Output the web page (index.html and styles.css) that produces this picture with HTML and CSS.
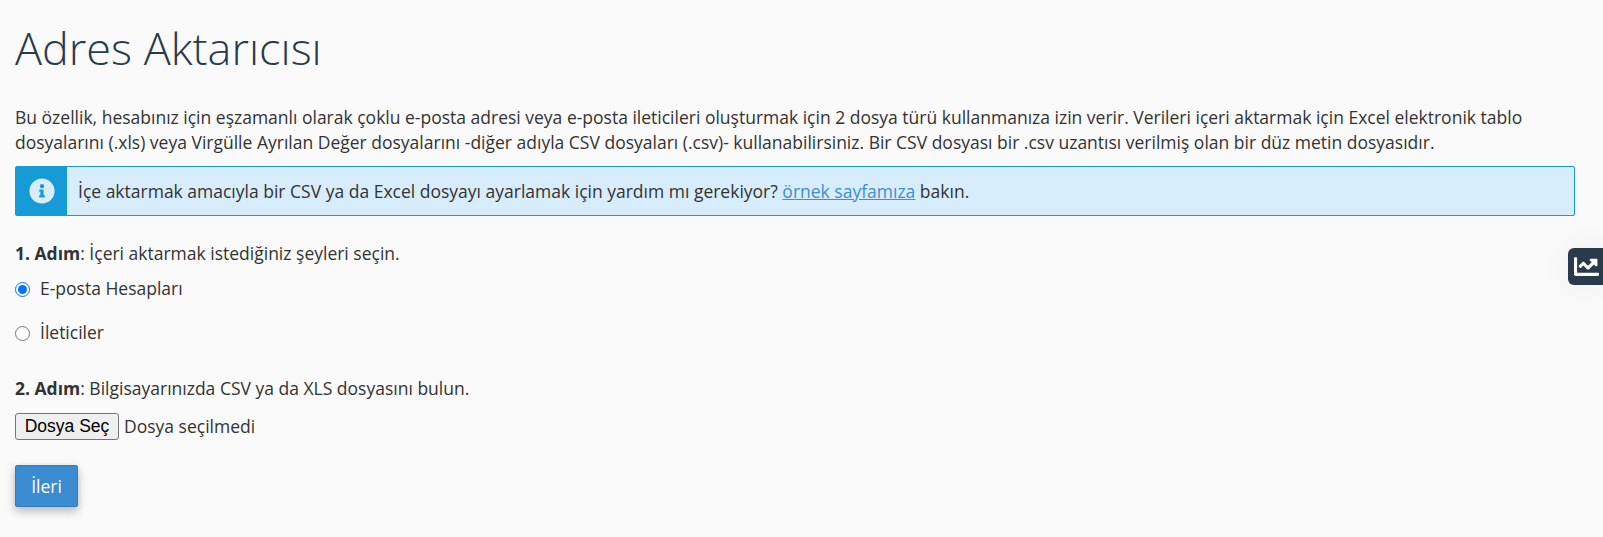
FILE: index.html
```html
<!DOCTYPE html>
<html lang="tr">

<head>
  <meta charset="UTF-8">
  <title>Adres Aktarıcısı</title>
  <link rel="stylesheet" href="styles.css">
</head>

<body>
  <div class="container">
    <h1>Adres Aktarıcısı</h1>
    <p class="intro">Bu özellik, hesabınız için eşzamanlı olarak çoklu e-posta adresi veya e-posta ileticileri oluşturmak için 2 dosya türü kullanmanıza izin verir. Verileri içeri aktarmak için Excel elektronik tablo dosyalarını (.xls) veya Virgülle Ayrılan Değer dosyalarını -diğer adıyla CSV dosyaları (.csv)- kullanabilirsiniz. Bir CSV dosyası bir .csv uzantısı verilmiş olan bir düz metin dosyasıdır.</p>

    <div class="alert">
      <div class="alert-icon">
        <svg width="26" height="26" viewBox="0 0 512 512">
          <path fill="#d7edfb" d="M256 8C119.043 8 8 119.083 8 256c0 136.997 111.043 248 248 248s248-111.003 248-248C504 119.083 392.957 8 256 8zm0 110c23.196 0 42 18.804 42 42s-18.804 42-42 42-42-18.804-42-42 18.804-42 42-42zm56 254c0 6.627-5.373 12-12 12h-88c-6.627 0-12-5.373-12-12v-24c0-6.627 5.373-12 12-12h12v-64h-12c-6.627 0-12-5.373-12-12v-24c0-6.627 5.373-12 12-12h64c6.627 0 12 5.373 12 12v100h12c6.627 0 12 5.373 12 12v24z" />
        </svg>
      </div>
      <div class="alert-body">İçe aktarmak amacıyla bir CSV ya da Excel dosyayı ayarlamak için yardım mı gerekiyor? <a href="#">örnek sayfamıza</a> bakın.</div>
    </div>

    <p class="step"><strong>1. Adım</strong>: İçeri aktarmak istediğiniz şeyleri seçin.</p>
    <label class="radio-row">
      <input type="radio" name="kind" checked>
      <span>E-posta Hesapları</span>
    </label>
    <label class="radio-row">
      <input type="radio" name="kind">
      <span>İleticiler</span>
    </label>

    <p class="step step-two"><strong>2. Adım</strong>: Bilgisayarınızda CSV ya da XLS dosyasını bulun.</p>
    <div class="file-row">
      <button class="file-btn" type="button">Dosya Seç</button>
      <span>Dosya seçilmedi</span>
    </div>

    <button class="next-btn" type="button">İleri</button>
  </div>

  <div class="stats-tab">
    <svg width="25" height="25" viewBox="0 0 512 512">
      <path fill="#fff" d="M496 384H64V80c0-8.840-7.160-16-16-16H16C7.160 64 0 71.160 0 80v336c0 17.670 14.330 32 32 32h464c8.840 0 16-7.160 16-16v-32c0-8.840-7.160-16-16-16zM464 96H345.940c-21.380 0-32.090 25.850-16.970 40.970l32.400 32.400L288 242.750l-73.370-73.370c-12.500-12.500-32.760-12.500-45.250 0l-68.690 68.690c-6.250 6.250-6.250 16.380 0 22.630l22.620 22.620c6.250 6.250 16.380 6.250 22.630 0L192 237.250l73.370 73.370c12.500 12.500 32.760 12.500 45.250 0l96-96 32.400 32.400c15.120 15.120 40.970 4.410 40.970-16.970V112c.01-8.840-7.150-16-16-16z" />
    </svg>
  </div>
</body>

</html>
```

FILE: styles.css
```css
html,
body {
  min-height: 100%;
}

body {
  font-family: "Open Sans", sans-serif;
  font-size: 17.5px;
  line-height: 24.5px;
  margin: 0;
  background: #fafafa;
  color: #333;
}

.container {
  padding: 20px 28px 30px 15px;
}

h1 {
  font-size: 45px;
  font-weight: 300;
  line-height: 56px;
  margin: 0 0 29px;
  color: #293a4a;
}

.intro {
  margin: 0 0 12px;
}

.alert {
  display: flex;
  height: 50px;
  box-sizing: border-box;
  border: 1px solid #179bd7;
  border-radius: 2px;
  background: #d7edfb;
}

.alert-icon {
  width: 51px;
  flex: none;
  display: flex;
  align-items: center;
  justify-content: center;
  background: #179bd7;
}

.alert-body {
  padding-left: 11px;
  align-self: center;
}

.alert-body a {
  color: #3d8fd1;
}

.step {
  margin: 25px 0 0;
}

.radio-row {
  display: flex;
  align-items: center;
  height: 24.5px;
  margin-top: 10px;
}

.radio-row + .radio-row {
  margin-top: 19.5px;
}

.radio-row input {
  width: 15px;
  height: 15px;
  margin: 3px 10px 0 0;
  accent-color: #0075ff;
}

.step-two {
  margin-top: 32px;
}

.file-row {
  display: flex;
  align-items: center;
  gap: 5px;
  margin-top: 12px;
}

.file-btn {
  width: 104px;
  height: 27px;
  padding: 0;
  font-family: "Liberation Sans", sans-serif;
  font-size: 17.5px;
  color: #000;
  background: #efefef;
  border: 1px solid #767676;
  border-radius: 3px;
}

.next-btn {
  display: block;
  margin-top: 25px;
  width: 63px;
  height: 42px;
  padding: 0;
  font-family: inherit;
  font-size: 17.5px;
  color: #fff;
  background: #3a8bd0;
  border: 1px solid #2f7dbf;
  border-radius: 2px;
  box-shadow: 0 4px 10px rgba(0, 0, 0, 0.28);
}

.stats-tab {
  position: absolute;
  top: 248px;
  right: 0;
  width: 35px;
  height: 37px;
  display: flex;
  align-items: center;
  justify-content: flex-end;
  padding-right: 4px;
  box-sizing: border-box;
  background: #293a4a;
  border-radius: 6px 0 0 6px;
  box-shadow: 0 0 30px rgba(0, 0, 0, 0.06);
}
```
